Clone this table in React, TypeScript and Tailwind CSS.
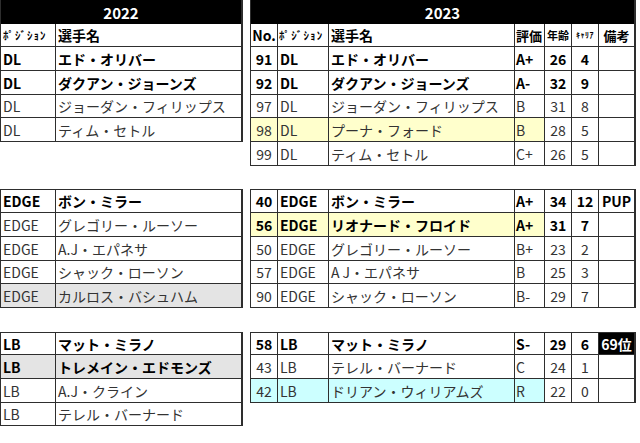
import React from "react";

type L = { pos: string; name: React.ReactNode; bold?: boolean; grey?: boolean };
type R = {
  no: string;
  pos: string;
  name: React.ReactNode;
  rate: string;
  age: string;
  car: string;
  note?: string;
  bold?: boolean;
  hl?: "y" | "c";
  black?: boolean;
};

const B = "border-[#2e2e2e]";

function Title({ text }: { text: string }) {
  return (
    <div className="h-[24px] bg-black text-white font-bold text-[15px] flex items-center justify-center leading-none">
      {text}
    </div>
  );
}

function LeftHeader() {
  return (
    <div className={`flex h-[23px] border-b ${B} bg-white text-black font-bold leading-none`}>
      <div className={`w-[55px] shrink-0 border-r ${B} flex items-center pl-[2px] text-[11px] tracking-[1px] whitespace-nowrap`}>
        ﾎﾟｼﾞｼｮﾝ
      </div>
      <div className="flex-1 flex items-center pl-[2px] text-[14px]">選手名</div>
    </div>
  );
}

function LeftRow({ r, h, top }: { r: L; h: string; top?: boolean }) {
  const txt = r.bold ? "font-bold text-black" : "font-normal text-[#333]";
  return (
    <div
      className={`flex ${h} border-b ${top ? "border-t" : ""} ${B} ${r.grey ? "bg-[#e4e4e4]" : "bg-white"} ${txt} text-[14px] leading-none`}
    >
      <div className={`w-[55px] shrink-0 border-r ${B} flex items-center pl-[2px]`}>{r.pos}</div>
      <div className="flex-1 flex items-center pl-[2px] whitespace-nowrap">{r.name}</div>
    </div>
  );
}

function RightHeader() {
  return (
    <div className={`flex h-[23px] border-b ${B} bg-white text-black font-bold leading-none`}>
      <div className={`w-[27px] shrink-0 border-r ${B} flex items-center justify-center text-[14px]`}>No.</div>
      <div className={`w-[51px] shrink-0 border-r ${B} flex items-center pl-[1px] text-[11px] tracking-[1.2px] whitespace-nowrap`}>
        ﾎﾟｼﾞｼｮﾝ
      </div>
      <div className={`w-[186px] shrink-0 border-r ${B} flex items-center pl-[2px] text-[14px]`}>選手名</div>
      <div className={`w-[30px] shrink-0 border-r ${B} flex items-center pl-[1px] text-[13px]`}>評価</div>
      <div className={`w-[27px] shrink-0 border-r ${B} flex items-center justify-center text-[11px]`}>年齢</div>
      <div className={`w-[27px] shrink-0 border-r ${B} flex items-center justify-center text-[8px] tracking-[0.5px] whitespace-nowrap`}>
        ｷｬﾘｱ
      </div>
      <div className="flex-1 flex items-center justify-center text-[13px]">備考</div>
    </div>
  );
}

function RightRow({ r, h, top }: { r: R; h: string; top?: boolean }) {
  const txt = r.bold ? "font-bold text-black" : "font-normal text-[#333]";
  const hl = r.hl === "y" ? "bg-[#ffffcc]" : r.hl === "c" ? "bg-[#ccffff]" : "bg-white";
  return (
    <div className={`flex ${h} border-b ${top ? "border-t" : ""} ${B} bg-white ${txt} text-[14px] leading-none`}>
      <div className={`w-[27px] shrink-0 border-r ${B} ${hl} flex items-center justify-center`}>{r.no}</div>
      <div className={`w-[51px] shrink-0 border-r ${B} ${hl} flex items-center pl-[2px]`}>{r.pos}</div>
      <div className={`w-[186px] shrink-0 border-r ${B} ${hl} flex items-center pl-[2px] whitespace-nowrap`}>{r.name}</div>
      <div className={`w-[30px] shrink-0 border-r ${B} ${hl} flex items-center pl-[1px]`}>{r.rate}</div>
      <div className={`w-[27px] shrink-0 border-r ${B} flex items-center justify-center`}>{r.age}</div>
      <div className={`w-[27px] shrink-0 border-r ${B} flex items-center justify-center`}>{r.car}</div>
      <div
        className={`flex-1 flex items-center justify-center ${r.black ? "bg-black text-white font-bold" : ""}`}
      >
        {r.note ?? ""}
      </div>
    </div>
  );
}

function LeftTable({ children }: { children: React.ReactNode }) {
  return <div className={`w-[243px] shrink-0 border-l border-r-2 ${B}`}>{children}</div>;
}

function RightTable({ children }: { children: React.ReactNode }) {
  return <div className={`w-[386px] shrink-0 ml-[7px] border-l border-r-2 ${B}`}>{children}</div>;
}

export default function App() {
  const s1L: L[] = [
    { pos: "DL", name: "エド・オリバー", bold: true },
    { pos: "DL", name: "ダクアン・ジョーンズ", bold: true },
    { pos: "DL", name: "ジョーダン・フィリップス" },
    { pos: "DL", name: "ティム・セトル" },
  ];
  const s1R: R[] = [
    { no: "91", pos: "DL", name: "エド・オリバー", rate: "A+", age: "26", car: "4", bold: true },
    { no: "92", pos: "DL", name: "ダクアン・ジョーンズ", rate: "A-", age: "32", car: "9", bold: true },
    { no: "97", pos: "DL", name: "ジョーダン・フィリップス", rate: "B", age: "31", car: "8" },
    { no: "98", pos: "DL", name: "プーナ・フォード", rate: "B", age: "28", car: "5", hl: "y" },
    { no: "99", pos: "DL", name: "ティム・セトル", rate: "C+", age: "26", car: "5" },
  ];
  const s1Lh = ["h-[24px]", "h-[24px]", "h-[23px]", "h-[24px]"];
  const s1Rh = ["h-[24px]", "h-[24px]", "h-[23px]", "h-[24px]", "h-[24px]"];

  const s2L: L[] = [
    { pos: "EDGE", name: "ボン・ミラー", bold: true },
    { pos: "EDGE", name: "グレゴリー・ルーソー" },
    { pos: "EDGE", name: "A.J・エパネサ" },
    { pos: "EDGE", name: "シャック・ローソン" },
    { pos: "EDGE", name: "カルロス・バシュハム", grey: true },
  ];
  const s2R: R[] = [
    { no: "40", pos: "EDGE", name: "ボン・ミラー", rate: "A+", age: "34", car: "12", note: "PUP", bold: true },
    { no: "56", pos: "EDGE", name: "リオナード・フロイド", rate: "A+", age: "31", car: "7", bold: true, hl: "y" },
    { no: "50", pos: "EDGE", name: "グレゴリー・ルーソー", rate: "B+", age: "23", car: "2" },
    {
      no: "57",
      pos: "EDGE",
      name: (
        <>
          <span className="tracking-[3px]">A</span>J・エパネサ
        </>
      ),
      rate: "B",
      age: "25",
      car: "3",
    },
    { no: "90", pos: "EDGE", name: "シャック・ローソン", rate: "B-", age: "29", car: "7" },
  ];
  const s2h = ["h-[24px]", "h-[24px]", "h-[24px]", "h-[23px]", "h-[24px]"];

  const s3L: L[] = [
    { pos: "LB", name: "マット・ミラノ", bold: true },
    { pos: "LB", name: "トレメイン・エドモンズ", bold: true, grey: true },
    { pos: "LB", name: "A.J・クライン" },
    { pos: "LB", name: "テレル・バーナード" },
  ];
  const s3R: R[] = [
    { no: "58", pos: "LB", name: "マット・ミラノ", rate: "S-", age: "29", car: "6", note: "69位", bold: true, black: true },
    { no: "43", pos: "LB", name: "テレル・バーナード", rate: "C", age: "24", car: "1" },
    { no: "42", pos: "LB", name: "ドリアン・ウィリアムズ", rate: "R", age: "22", car: "0", hl: "c" },
  ];
  const s3h = ["h-[23px]", "h-[24px]", "h-[24px]", "h-[23px]"];

  return (
    <div className="w-[640px] h-[443px] bg-white overflow-hidden font-['Noto_Sans_CJK_JP','Noto_Sans',sans-serif]">
      <div className="flex items-start">
        <LeftTable>
          <Title text="2022" />
          <LeftHeader />
          {s1L.map((r, i) => (
            <LeftRow key={i} r={r} h={s1Lh[i]} />
          ))}
        </LeftTable>
        <RightTable>
          <Title text="2023" />
          <RightHeader />
          {s1R.map((r, i) => (
            <RightRow key={i} r={r} h={s1Rh[i]} />
          ))}
        </RightTable>
      </div>

      <div className="flex items-start mt-[23px]">
        <LeftTable>
          {s2L.map((r, i) => (
            <LeftRow key={i} r={r} h={s2h[i]} top={i === 0} />
          ))}
        </LeftTable>
        <RightTable>
          {s2R.map((r, i) => (
            <RightRow key={i} r={r} h={s2h[i]} top={i === 0} />
          ))}
        </RightTable>
      </div>

      <div className="flex items-start mt-[24px]">
        <LeftTable>
          {s3L.map((r, i) => (
            <LeftRow key={i} r={r} h={s3h[i]} top={i === 0} />
          ))}
        </LeftTable>
        <RightTable>
          {s3R.map((r, i) => (
            <RightRow key={i} r={r} h={s3h[i]} top={i === 0} />
          ))}
        </RightTable>
      </div>
    </div>
  );
}
